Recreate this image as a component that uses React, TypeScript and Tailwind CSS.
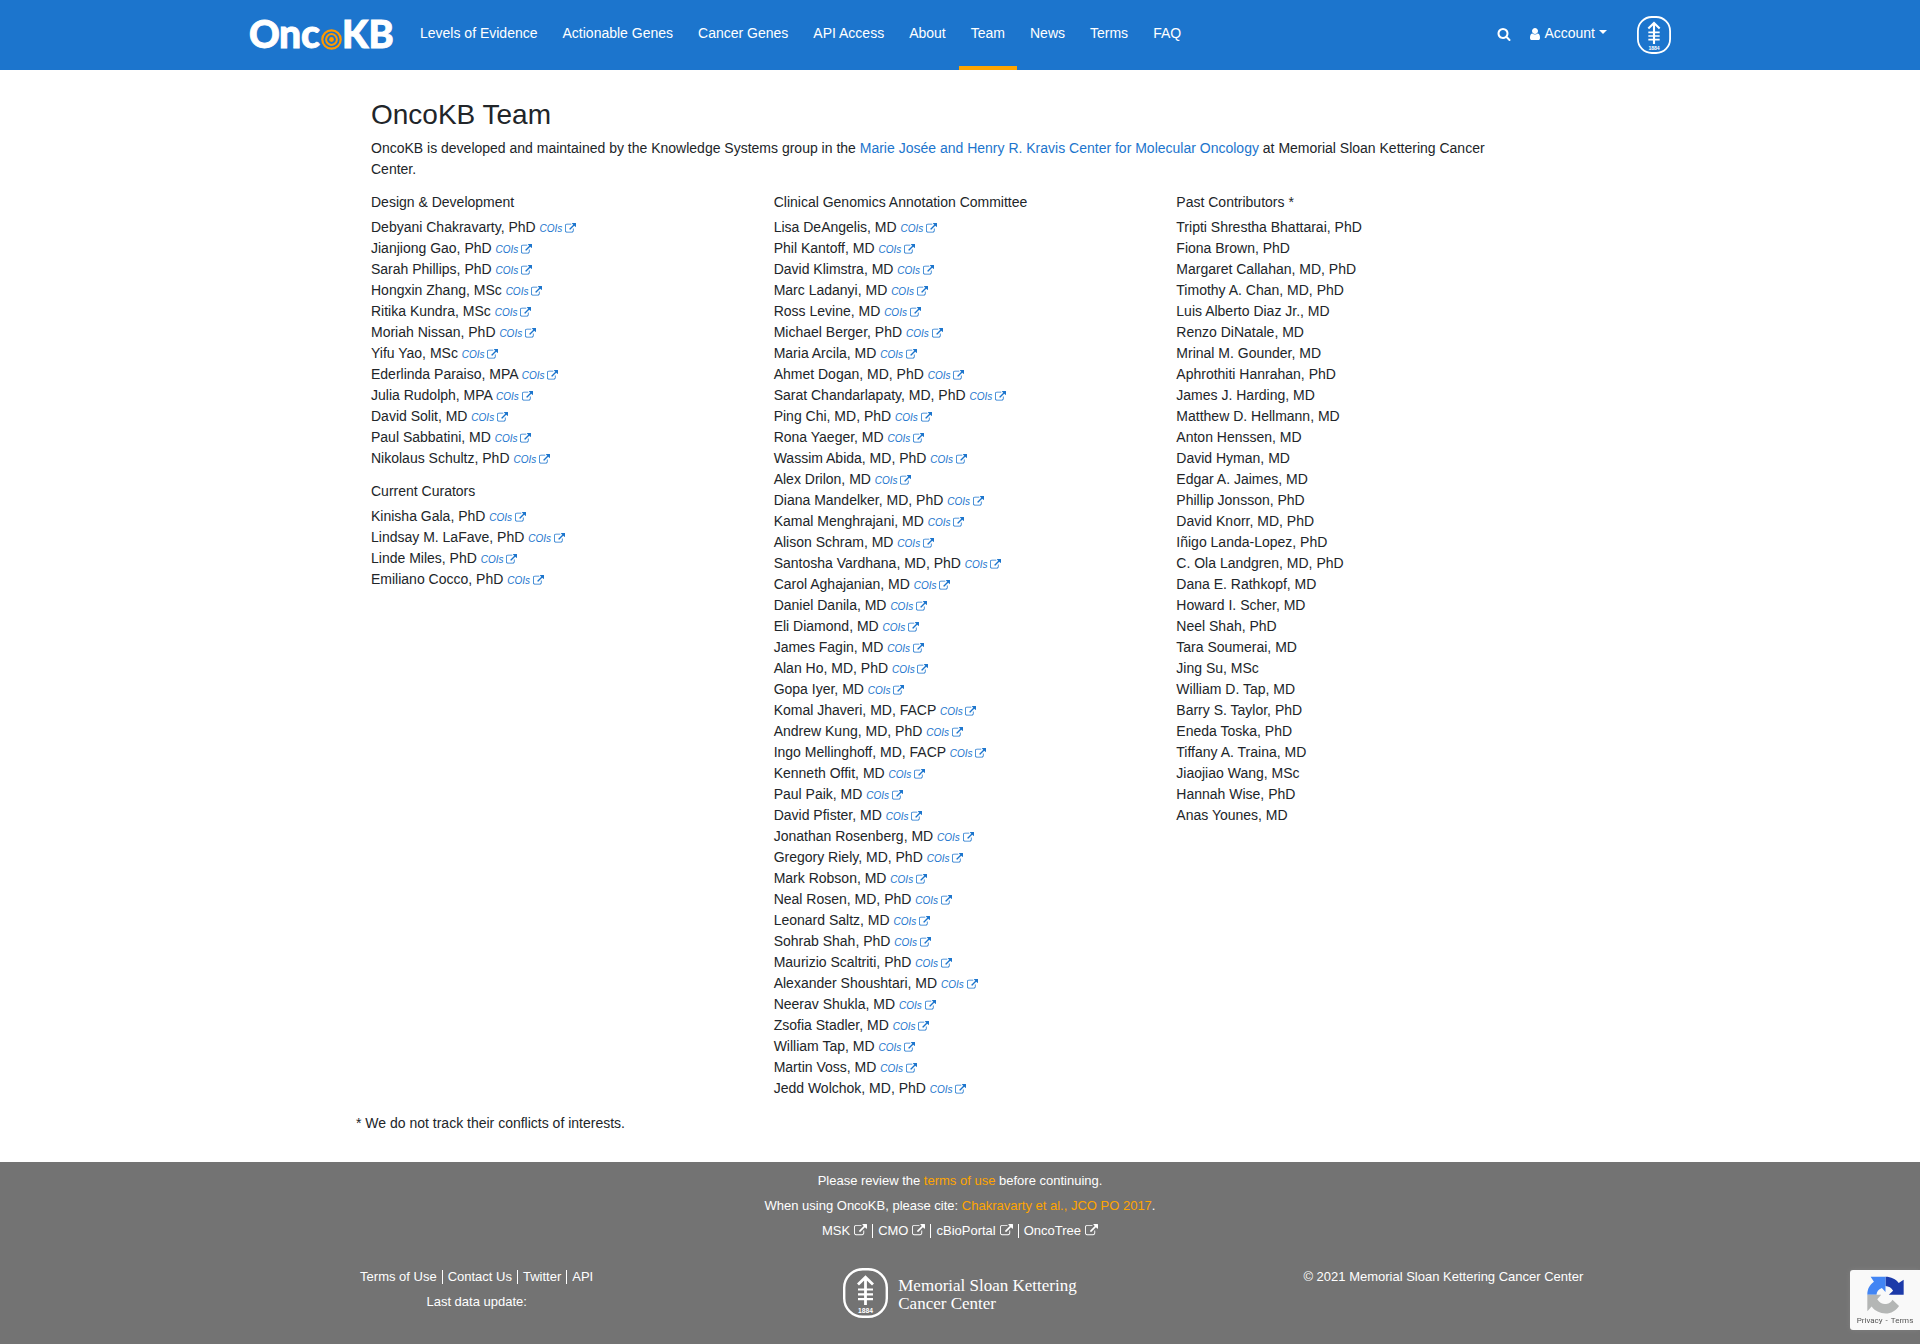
import React from "react";

const designDevelopment = [
  "Debyani Chakravarty, PhD", "Jianjiong Gao, PhD", "Sarah Phillips, PhD", "Hongxin Zhang, MSc",
  "Ritika Kundra, MSc", "Moriah Nissan, PhD", "Yifu Yao, MSc", "Ederlinda Paraiso, MPA",
  "Julia Rudolph, MPA", "David Solit, MD", "Paul Sabbatini, MD", "Nikolaus Schultz, PhD",
];

const currentCurators = [
  "Kinisha Gala, PhD", "Lindsay M. LaFave, PhD", "Linde Miles, PhD", "Emiliano Cocco, PhD",
];

const annotationCommittee = [
  "Lisa DeAngelis, MD", "Phil Kantoff, MD", "David Klimstra, MD", "Marc Ladanyi, MD",
  "Ross Levine, MD", "Michael Berger, PhD", "Maria Arcila, MD", "Ahmet Dogan, MD, PhD",
  "Sarat Chandarlapaty, MD, PhD", "Ping Chi, MD, PhD", "Rona Yaeger, MD", "Wassim Abida, MD, PhD",
  "Alex Drilon, MD", "Diana Mandelker, MD, PhD", "Kamal Menghrajani, MD", "Alison Schram, MD",
  "Santosha Vardhana, MD, PhD", "Carol Aghajanian, MD", "Daniel Danila, MD", "Eli Diamond, MD",
  "James Fagin, MD", "Alan Ho, MD, PhD", "Gopa Iyer, MD", "Komal Jhaveri, MD, FACP",
  "Andrew Kung, MD, PhD", "Ingo Mellinghoff, MD, FACP", "Kenneth Offit, MD", "Paul Paik, MD",
  "David Pfister, MD", "Jonathan Rosenberg, MD", "Gregory Riely, MD, PhD", "Mark Robson, MD",
  "Neal Rosen, MD, PhD", "Leonard Saltz, MD", "Sohrab Shah, PhD", "Maurizio Scaltriti, PhD",
  "Alexander Shoushtari, MD", "Neerav Shukla, MD", "Zsofia Stadler, MD", "William Tap, MD",
  "Martin Voss, MD", "Jedd Wolchok, MD, PhD",
];

const pastContributors = [
  "Tripti Shrestha Bhattarai, PhD", "Fiona Brown, PhD", "Margaret Callahan, MD, PhD",
  "Timothy A. Chan, MD, PhD", "Luis Alberto Diaz Jr., MD", "Renzo DiNatale, MD",
  "Mrinal M. Gounder, MD", "Aphrothiti Hanrahan, PhD", "James J. Harding, MD",
  "Matthew D. Hellmann, MD", "Anton Henssen, MD", "David Hyman, MD", "Edgar A. Jaimes, MD",
  "Phillip Jonsson, PhD", "David Knorr, MD, PhD", "Iñigo Landa-Lopez, PhD",
  "C. Ola Landgren, MD, PhD", "Dana E. Rathkopf, MD", "Howard I. Scher, MD", "Neel Shah, PhD",
  "Tara Soumerai, MD", "Jing Su, MSc", "William D. Tap, MD", "Barry S. Taylor, PhD",
  "Eneda Toska, PhD", "Tiffany A. Traina, MD", "Jiaojiao Wang, MSc", "Hannah Wise, PhD",
  "Anas Younes, MD",
];

const navItems = [
  "Levels of Evidence", "Actionable Genes", "Cancer Genes", "API Access", "About", "Team",
  "News", "Terms", "FAQ",
];

function ExternalLinkIcon({ className }: { className: string }) {
  return (
    <svg viewBox="0 0 1792 1792" fill="currentColor" aria-hidden="true" className={className}>
      <path d="M1408 928v320q0 119-84.5 203.5t-203.5 84.5h-832q-119 0-203.5-84.5t-84.5-203.5v-832q0-119 84.5-203.5t203.5-84.5h704q14 0 23 9t9 23v64q0 14-9 23t-23 9h-704q-66 0-113 47t-47 113v832q0 66 47 113t113 47h832q66 0 113-47t47-113v-320q0-14 9-23t23-9h64q14 0 23 9t9 23zm384-864v512q0 26-19 45t-45 19-45-19l-176-176-652 652q-10 10-23 10t-23-10l-114-114q-10-10-10-23t10-23l652-652-176-176q-19-19-19-45t19-45 45-19h512q26 0 45 19t19 45z" />
    </svg>
  );
}

function SearchIcon() {
  return (
    <svg viewBox="0 0 1792 1792" fill="currentColor" aria-hidden="true" className="size-[14px]">
      <path d="M1216 832q0-185-131.5-316.5t-316.5-131.5-316.5 131.5-131.5 316.5 131.5 316.5 316.5 131.5 316.5-131.5 131.5-316.5zm512 832q0 52-38 90t-90 38q-54 0-90-38l-343-342q-179 124-399 124-143 0-273.5-55.5t-225-150-150-225-55.5-273.5 55.5-273.5 150-225 225-150 273.5-55.5 273.5 55.5 225 150 150 225 55.5 273.5q0 220-124 399l343 343q37 37 37 90z" />
    </svg>
  );
}

function UserIcon() {
  return (
    <svg viewBox="256 128 1280 1536" fill="currentColor" aria-hidden="true" className="h-3 w-[10px]">
      <path d="M1536 1399q0 109-62.5 187t-150.5 78h-854q-88 0-150.5-78t-62.5-187q0-85 8.5-160.5t31.5-152 58.5-131 94-89 134.5-34.5q131 128 313 128t313-128q76 0 134.5 34.5t94 89 58.5 131 31.5 152 8.5 160.5zm-256-887q0 159-112.5 271.5t-271.5 112.5-271.5-112.5-112.5-271.5 112.5-271.5 271.5-112.5 271.5 112.5 112.5 271.5z" />
    </svg>
  );
}

function MskSeal({ className }: { className: string }) {
  return (
    <svg viewBox="0 0 45 50" fill="none" stroke="white" aria-hidden="true" className={className}>
      <rect x="1.2" y="1.2" width="42.6" height="47.6" rx="18.5" strokeWidth="2.4" />
      <path d="M22.500 10v27M15 16.500l7.500-7.300 7.500 7.300" strokeWidth="2.8" />
      <path d="M15 21.500h15M15 26.300h15M15 31.100h15" strokeWidth="2.2" />
      <text x="22.500" y="44.500" textAnchor="middle" fill="white" stroke="none" fontSize="6.700" fontWeight="700" fontFamily="Liberation Sans, sans-serif">
        1884
      </text>
    </svg>
  );
}

function OncoLogo() {
  return (
    <a href="#home" aria-label="OncoKB" className="flex h-[70px] items-center">
      <svg viewBox="-2 -14 148 62" className="-mx-[2px] h-[62px] w-[148px]" role="img" aria-label="OncoKB">
        <g fill="white" stroke="white" strokeWidth="0.9" fontFamily="Lato, sans-serif" fontWeight="900" fontSize="38">
          <text x="-1" y="30">O</text>
          <text x="29" y="30" fontSize="39">nc</text>
          <text x="92" y="30">KB</text>
        </g>
        <g fill="none" stroke="#ff9900">
          <circle cx="81.500" cy="21.500" r="9.200" strokeWidth="2.200" />
          <circle cx="81.500" cy="21.500" r="5.400" strokeWidth="2" />
          <circle cx="81.500" cy="21.500" r="2.400" fill="#ff9900" stroke="none" />
        </g>
      </svg>
    </a>
  );
}

function People({ title, names, coi }: { title: string; names: string[]; coi?: boolean }) {
  return (
    <section className="mb-[14px]">
      <h2 className="mb-[6px] leading-[17px]">{title}</h2>
      <ul>
        {names.map((name) => (
          <li key={name}>
            {name}
            {coi && (
              <>
                {" "}
                <a href="#cois" className="text-[10px] leading-none text-[#1c75cd] italic">
                  COIs <ExternalLinkIcon className="inline-block size-[11px] align-[-2px]" />
                </a>
              </>
            )}
          </li>
        ))}
      </ul>
    </section>
  );
}

function Piped({ items, external }: { items: string[]; external?: boolean }) {
  return (
    <ul className="flex h-[25px] items-center justify-center gap-[5px] divide-x divide-white">
      {items.map((item) => (
        <li key={item} className="flex h-[14px] items-center pr-[5px] last:pr-0">
          <a href="#link" className="flex items-center gap-1">
            {item}
            {external && <ExternalLinkIcon className="size-[13px]" />}
          </a>
        </li>
      ))}
    </ul>
  );
}

function Recaptcha() {
  return (
    <aside className="fixed right-0 bottom-[14px] flex h-[60px] w-[70px] flex-col items-center gap-[2px] rounded-l-[3px] bg-[#f9f9f9] pt-[6px] shadow-[0_0_5px_gray]">
      <svg viewBox="79 49 112 114" className="h-[38px] w-[37px]" aria-hidden="true">
        <path fill="#1c3aa9" d="M135 51C152 51 166 58 175 70L190 60V105H145L158 93C153 84 145 80 135 79Z" />
        <path fill="#4285f4" d="M90 51H135V97L124 85C113 89 108 97 108 105H80C80 88 87 75 100 66Z" />
        <path fill="#b4b6b5" d="M80 105H122L110 119C118 132 128 134 137 133C147 132 153 126 156 120L176 139C166 153 152 162 136 162C118 162 102 154 93 141L80 155Z" />
      </svg>
      <p className="flex gap-[3px] font-[Roboto,sans-serif] text-[8px] leading-[10px] text-[#555]">
        <a href="#privacy">Privacy</a>
        <span>-</span>
        <a href="#terms">Terms</a>
      </p>
    </aside>
  );
}

export default function App() {
  return (
    <div className="flex min-h-screen flex-col bg-white font-['Liberation_Sans',Arial,sans-serif] text-[14px] leading-[21px] text-[#212529]">
      <header className="bg-[#1c75cd] text-white">
        <div className="mx-auto flex h-[70px] max-w-[1450px] items-center pr-[14px] pl-[15px]">
          <OncoLogo />
          <nav className="ml-[14px] flex h-full gap-px">
            {navItems.map((item) => (
              <a
                key={item}
                href="#nav"
                className={
                  item === "Team"
                    ? "flex items-center border-b-4 border-[#ffa500] px-[12px]"
                    : "flex items-center border-b-4 border-transparent px-[12px]"
                }
              >
                {item}
              </a>
            ))}
          </nav>
          <div className="ml-auto flex items-center">
            <div className="flex items-center gap-[19px] pr-[30px] pb-[3px]">
              <button type="button" aria-label="Search">
                <SearchIcon />
              </button>
              <button type="button" className="flex items-center gap-1">
                <UserIcon />
                Account
                <span className="mb-1 border-x-4 border-t-4 border-x-transparent border-t-white" />
              </button>
            </div>
            <a href="#msk" aria-label="Memorial Sloan Kettering">
              <MskSeal className="h-[38px] w-[34px]" />
            </a>
          </div>
        </div>
      </header>

      <main className="mx-auto w-full max-w-[1208px] pt-7 pb-7">
        <div className="px-[15px]">
          <h1 className="mb-[6px] text-[28px] leading-[34px]">OncoKB Team</h1>
          <p className="mb-[14px] pr-8">
            OncoKB is developed and maintained by the Knowledge Systems group in the{" "}
            <a href="#cmo" className="text-[#1c75cd]">
              Marie Josée and Henry R. Kravis Center for Molecular Oncology
            </a>{" "}
            at Memorial Sloan Kettering Cancer Center.
          </p>
        </div>
        <div className="grid grid-cols-3">
          <div className="px-[15px]">
            <People title="Design & Development" names={designDevelopment} coi />
            <People title="Current Curators" names={currentCurators} coi />
          </div>
          <div className="px-[15px]">
            <People title="Clinical Genomics Annotation Committee" names={annotationCommittee} coi />
          </div>
          <div className="px-[15px]">
            <People title="Past Contributors *" names={pastContributors} />
          </div>
        </div>
        <p>* We do not track their conflicts of interests.</p>
      </main>

      <footer className="grow bg-[#737373] pt-[6px] text-[13px] leading-[25px] text-white">
        <div className="text-center">
          <p>
            Please review the <a href="#terms" className="text-[#ffa500]">terms of use</a> before continuing.
          </p>
          <p>
            When using OncoKB, please cite:{" "}
            <a href="#cite" className="text-[#ffa500]">Chakravarty et al., JCO PO 2017</a>.
          </p>
          <Piped items={["MSK", "CMO", "cBioPortal", "OncoTree"]} external />
        </div>
        <div className="mx-auto mt-[21px] grid max-w-[1450px] grid-cols-3 text-center">
          <div>
            <Piped items={["Terms of Use", "Contact Us", "Twitter", "API"]} />
            <p>Last data update:</p>
          </div>
          <a href="#msk" className="mt-1 flex items-center justify-center gap-[10px]">
            <MskSeal className="h-[50px] w-[45px]" />
            <span className="pt-[3px] text-left font-['Liberation_Serif',serif] text-[17px] leading-[18px]">
              Memorial Sloan Kettering
              <br />
              Cancer Center
            </span>
          </a>
          <p>© 2021 Memorial Sloan Kettering Cancer Center</p>
        </div>
      </footer>
      <Recaptcha />
    </div>
  );
}
